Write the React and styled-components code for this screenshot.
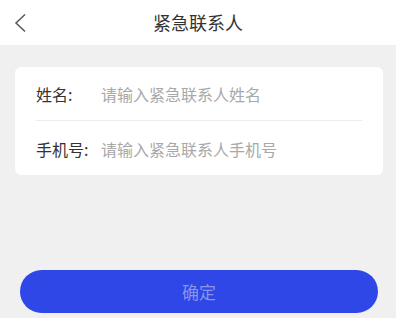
import React from "react";
import styled, { createGlobalStyle } from "styled-components";

const GlobalStyle = createGlobalStyle`
  html, body {
    margin: 0;
    padding: 0;
    background: #f0f0f0;
    font-family: "Noto Sans CJK SC", "Noto Sans", sans-serif;
  }
`;

const Page = styled.div`
  width: 396px;
  height: 318px;
  background: #f0f0f0;
  display: flex;
  flex-direction: column;
  overflow: hidden;
`;

const Header = styled.header`
  height: 45px;
  background: #fff;
  display: grid;
  grid-template-columns: 60px 1fr 60px;
  align-items: center;
`;

const BackButton = styled.button`
  border: 0;
  background: none;
  padding: 0 0 0 13px;
  height: 45px;
  display: flex;
  align-items: center;
  cursor: pointer;
`;

const Title = styled.h1`
  margin: 0 0 1px;
  font-size: 18px;
  font-weight: 400;
  color: #333;
  text-align: center;
`;

const Card = styled.div`
  margin: 22px 13px 0 15px;
  background: #fff;
  border-radius: 6px;
  padding: 0 21px;
`;

const Row = styled.label`
  display: flex;
  align-items: center;
  height: 53px;
  padding-top: ${(p) => (p.$last ? "1px" : "0")};
  border-bottom: ${(p) => (p.$last ? "none" : "1px solid #ececec")};
`;

const Label = styled.span`
  width: 65px;
  flex-shrink: 0;
  font-size: 16px;
  color: #333;
`;

const Input = styled.input`
  flex: 1;
  min-width: 0;
  border: 0;
  outline: none;
  padding: 0;
  font-family: inherit;
  font-size: 16px;
  color: #333;
  background: transparent;
  &::placeholder {
    color: #a8a8a8;
  }
`;

const Footer = styled.div`
  margin-top: auto;
  padding: 0 18px 5px 20px;
`;

const Submit = styled.button`
  width: 100%;
  height: 43px;
  border: 0;
  border-radius: 22px;
  background: #2f47e6;
  color: #8794ec;
  font-family: inherit;
  font-size: 17px;
  cursor: pointer;
`;

const BackIcon = () => (
  <svg width="14" height="20" viewBox="0 0 14 20" fill="none">
    <path d="M12 1.5 L3 10 L12 18.5" stroke="#555" strokeWidth="1.5" />
  </svg>
);

export default function App() {
  return (
    <>
      <GlobalStyle />
      <Page>
        <Header>
          <BackButton aria-label="返回">
            <BackIcon />
          </BackButton>
          <Title>紧急联系人</Title>
          <span />
        </Header>
        <Card>
          <Row>
            <Label>姓名:</Label>
            <Input placeholder="请输入紧急联系人姓名" />
          </Row>
          <Row $last>
            <Label>手机号:</Label>
            <Input placeholder="请输入紧急联系人手机号" />
          </Row>
        </Card>
        <Footer>
          <Submit>确定</Submit>
        </Footer>
      </Page>
    </>
  );
}
